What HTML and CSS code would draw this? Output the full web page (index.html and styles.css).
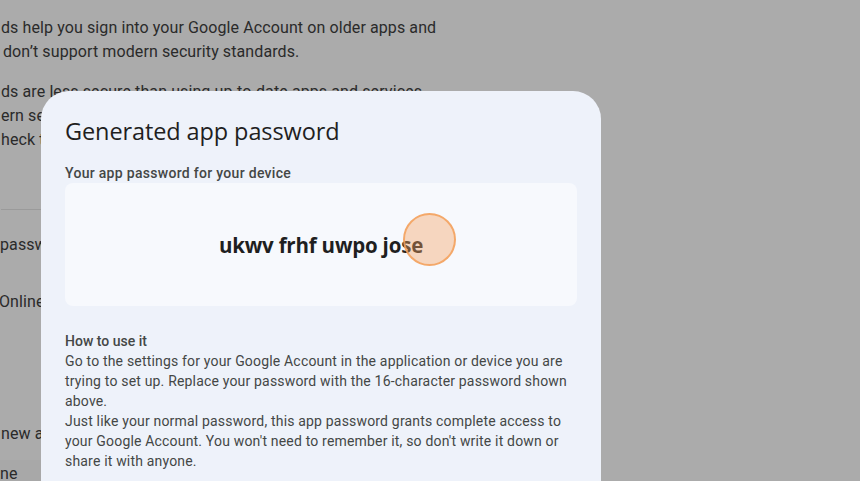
FILE: index.html
```html
<!DOCTYPE html>
<html lang="en">
<head>
<meta charset="utf-8">
<title>Generated app password</title>
<link rel="stylesheet" href="styles.css">
</head>
<body>
<div class="page">
  <p class="bg-para">
    <span class="line">ds help you sign into your Google Account on older apps and</span>
    <span class="line indent">don’t support modern security standards.</span>
  </p>
  <p class="bg-para second">
    <span class="line">ds are less secure than using up-to-date apps and services</span>
    <span class="line">ern security standards. Before you create an app password</span>
    <span class="line">heck to see if your app needs this to sign in.</span>
  </p>
  <div class="divider"></div>
  <div class="bg-row r1">passwords</div>
  <div class="bg-row r2">Online</div>
  <div class="bg-row r3">new app</div>
  <div class="bg-row r4 hover">ne</div>
</div>

<div class="dialog">
  <h1 class="title">Generated app password</h1>
  <div class="label">Your app password for your device</div>
  <div class="pw-box">
    <span class="pw">ukwv frhf uwpo jose</span>
  </div>
  <div class="howto">
    <div class="howto-title">How to use it</div>
    <div class="howto-text">Go to the settings for your Google Account in the application or device you are trying to set up. Replace your password with the 16-character password shown above.<br>Just like your normal password, this app password grants complete access to your Google Account. You won't need to remember it, so don't write it down or share it with anyone.</div>
  </div>
</div>
<div class="click-dot"></div>
</body>
</html>
```

FILE: styles.css
```css
html, body {
  margin: 0;
  padding: 0;
  width: 860px;
  height: 481px;
  overflow: hidden;
  background: #ababab;
}

.page {
  font-family: Roboto, "Liberation Sans", sans-serif;
  color: #2a2a2a;
  font-size: 16px;
  line-height: 24px;
  letter-spacing: 0.1px;
  padding-top: 16px;
  padding-left: 1px;
}

.bg-para {
  margin: 0;
  white-space: nowrap;
}

.bg-para.second {
  margin-top: 16px;
}

.line {
  display: block;
}

.line.indent {
  padding-left: 2px;
}

.divider {
  margin-top: 57px;
  height: 1px;
  background: #9a9a9a;
  width: 100px;
}

.bg-row {
  white-space: nowrap;
  height: 24px;
}

.r1 { margin-top: 23px; margin-left: -1px; }
.r2 { margin-top: 33px; margin-left: -2px; }
.r3 { margin-top: 108px; margin-left: 0; }
.r4 { margin-top: 14px; margin-left: -1px; }

.hover {
  background: #a8a8a8;
  width: 100px;
  height: 60px;
  padding-top: 2px;
}

.dialog {
  position: absolute;
  left: 41px;
  top: 91px;
  width: 560px;
  height: 420px;
  box-sizing: border-box;
  padding: 24px 24px 0 24px;
  background: #eef2fa;
  border-radius: 28px;
  font-family: Roboto, "Liberation Sans", sans-serif;
  color: #1f1f1f;
}

.title {
  margin: 0;
  font-family: "Open Sans", Roboto, sans-serif;
  font-weight: 400;
  font-size: 23.5px;
  line-height: 32px;
  letter-spacing: -0.1px;
  color: #1f1f1f;
}

.label {
  margin-top: 16px;
  font-size: 14px;
  line-height: 20px;
  font-weight: 500;
  letter-spacing: 0.3px;
  color: #444746;
}

.pw-box {
  height: 123px;
  background: #f7f9fd;
  border-radius: 8px;
  display: flex;
  align-items: center;
  justify-content: center;
}

.pw {
  font-family: "Open Sans", Roboto, sans-serif;
  font-weight: 700;
  font-size: 20.5px;
  color: #1f1f1f;
  letter-spacing: -0.2px;
  padding-top: 1px;
}

.howto {
  margin-top: 25px;
  font-size: 14px;
  line-height: 20px;
  letter-spacing: 0.18px;
  color: #444746;
}

.howto-title {
  font-weight: 500;
  letter-spacing: 0;
}

.click-dot {
  position: absolute;
  left: 403px;
  top: 213px;
  width: 49px;
  height: 49px;
  border: 2px solid rgba(243, 160, 90, 0.85);
  border-radius: 50%;
  background: rgba(246, 162, 98, 0.4);
}
```
